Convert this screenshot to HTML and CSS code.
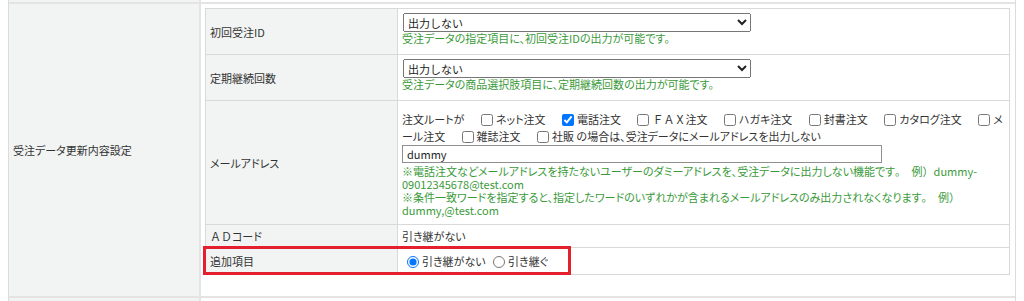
FILE: index.html
```html
<!DOCTYPE html>
<html lang="ja">
<head>
    <meta charset="UTF-8">
    <title>受注データ更新内容設定</title>
    <link rel="stylesheet" href="styles.css">
</head>
<body>
    <div class="page">
        <table class="outer">
            <tr class="edge-top">
                <th></th>
                <td></td>
            </tr>
            <tr>
                <th>受注データ更新内容設定</th>
                <td class="outer-val">
                    <table class="inner">
                        <tr>
                            <th>初回受注ID</th>
                            <td class="pick">
                                <select class="select">
                                    <option>出力しない</option>
                                    <option>出力する</option>
                                </select>
                                <p class="note">受注データの指定項目に、初回受注IDの出力が可能です。</p>
                            </td>
                        </tr>
                        <tr>
                            <th>定期継続回数</th>
                            <td class="pick">
                                <select class="select">
                                    <option>出力しない</option>
                                    <option>出力する</option>
                                </select>
                                <p class="note">受注データの商品選択肢項目に、定期継続回数の出力が可能です。</p>
                            </td>
                        </tr>
                        <tr>
                            <th>メールアドレス</th>
                            <td class="mail">
                                <div class="routes">注文ルートが <label class="route"><input type="checkbox">ネット注文</label> <label class="route"><input type="checkbox" checked>電話注文</label> <label class="route"><input type="checkbox"><span class="fw">ＦＡＸ</span>注文</label> <label class="route"><input type="checkbox">ハガキ注文</label> <label class="route"><input type="checkbox">封書注文</label> <label class="route"><input type="checkbox">カタログ注文</label> <label class="route"><input type="checkbox">メール注文</label> <label class="route"><input type="checkbox">雑誌注文</label> <label class="route"><input type="checkbox">社販</label> の場合は、受注データにメールアドレスを出力しない</div>
                                <input type="text" class="text" value="dummy">
                                <p class="note">※電話注文などメールアドレスを持たないユーザーのダミーアドレスを、受注データに出力しない機能です<span class="fw">。　例）</span>dummy-09012345678@test.com</p>
                                <p class="note">※条件一致ワードを指定すると、指定したワードのいずれかが含まれるメールアドレスのみ出力されなくなります<span class="fw">。　例）</span>dummy,@test.com</p>
                            </td>
                        </tr>
                        <tr>
                            <th><span class="fw">ＡＤ</span>コード</th>
                            <td class="plain">引き継がない</td>
                        </tr>
                        <tr>
                            <th class="marked">追加項目<span class="red-box"></span></th>
                            <td class="radios">
                                <label><input type="radio" name="extra" checked>引き継がない</label>
                                <label><input type="radio" name="extra">引き継ぐ</label>
                            </td>
                        </tr>
                    </table>
                </td>
            </tr>
            <tr class="edge-bottom">
                <th></th>
                <td></td>
            </tr>
        </table>
    </div>
</body>
</html>
```

FILE: styles.css
```css
body {
    margin: 0;
    font-family: "Noto Sans CJK JP", sans-serif;
    font-size: 11px;
    color: #333;
    font-feature-settings: "palt";
    background-color: white;
}

.page {
    padding: 0 8px;
}

/* full-width letters keep their full width */
.fw {
    font-feature-settings: normal;
}

.outer {
    width: 100%;
    border-collapse: separate;
    border-spacing: 0;
    border-left: 1px solid #dcdcdc;
    border-right: 1px solid #dcdcdc;
}

.outer > tbody > tr > th {
    width: 182px;
    padding: 0 4px;
    background-color: #f2f4f4;
    border-right: 2px solid #e4e4e4;
    text-align: left;
    font-weight: normal;
}

.outer-val {
    padding: 4px 5px 21px 4px;
}

.edge-top th,
.edge-top td {
    height: 2px;
    padding: 0;
    border-bottom: 2px solid #e4e4e4;
}

.edge-bottom th,
.edge-bottom td {
    height: 3px;
    padding: 0;
    border-top: 2px solid #e4e4e4;
}

.inner {
    width: 100%;
    border-collapse: separate;
    border-spacing: 0;
    border-top: 1px solid #d9d9d9;
    border-left: 1px solid #d9d9d9;
}

.inner th {
    width: 183px;
    padding: 0 4px;
    background-color: #f2f4f4;
    border-right: 1px solid #d9d9d9;
    border-bottom: 1px solid #d9d9d9;
    text-align: left;
    font-weight: normal;
}

.inner td {
    padding: 4px;
    background-color: white;
    border-right: 1px solid #d9d9d9;
    border-bottom: 1px solid #d9d9d9;
}

.pick {
    padding-bottom: 9px !important;
}

.select {
    display: block;
    width: 348px;
    height: 19px;
    margin: 0 0 0 1px;
    font-family: inherit;
    font-size: 11px;
    color: #222;
}

.note {
    margin: 0;
    line-height: 13px;
    color: #3a9a3a;
}

.mail {
    padding: 10px 4px 7px 4px !important;
}

.routes {
    line-height: 17px;
}

.route {
    margin-left: 10px;
}

.route input {
    width: 12px;
    height: 12px;
    margin: 0 3px 0 4px;
    vertical-align: -2px;
}

.text {
    display: block;
    box-sizing: border-box;
    width: 480px;
    height: 18px;
    margin: 0 0 2px 0;
    padding: 0 4px;
    border: 1px solid #8f8f8f;
    font-family: inherit;
    font-size: 11px;
    color: #222;
}

.plain {
    line-height: 14px;
}

.radios {
    line-height: 18px;
}

.radios input {
    width: 12px;
    height: 12px;
    margin: 0 3px 0 5px;
    vertical-align: -2px;
}

.marked {
    position: relative;
}

.red-box {
    position: absolute;
    left: -3px;
    top: -2px;
    width: 368px;
    height: 29px;
    box-sizing: border-box;
    border: 3px solid #e5202e;
    pointer-events: none;
}
```
